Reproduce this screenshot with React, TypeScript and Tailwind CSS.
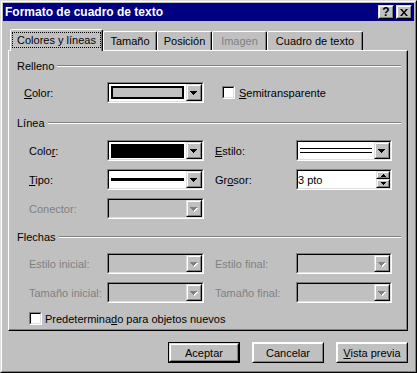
import React from "react";

const Raised = ({ className = "", children }: { className?: string; children?: React.ReactNode }) => (
  <div className={`flex border border-t-[#dfdfdf] border-l-[#dfdfdf] border-r-black border-b-black ${className}`}>
    <div className="flex flex-1 items-center justify-center border border-t-white border-l-white border-r-[#808080] border-b-[#808080] bg-[#c0c0c0]">
      {children}
    </div>
  </div>
);

const Sunken = ({ className = "", inner = "", children }: { className?: string; inner?: string; children?: React.ReactNode }) => (
  <div className={`flex border border-t-[#808080] border-l-[#808080] border-r-white border-b-white ${className}`}>
    <div className={`flex flex-1 border border-t-black border-l-black border-r-[#dfdfdf] border-b-[#dfdfdf] ${inner}`}>{children}</div>
  </div>
);

const Arrow = ({ disabled = false }: { disabled?: boolean }) => {
  const d = "M0 0h7v1H0zM1 1h5v1H1zM2 2h3v1H2zM3 3h1v1H3z";
  return (
    <svg width="8" height="5" viewBox="0 0 8 5" className="mt-px">
      {disabled && <path d={d} fill="#fff" transform="translate(1 1)" />}
      <path d={d} fill={disabled ? "#808080" : "#000"} />
    </svg>
  );
};

const Combo = ({ w = "w-[97px]", disabled = false, children }: { w?: string; disabled?: boolean; children?: React.ReactNode }) => (
  <Sunken className={`${w} h-[21px] shrink-0`} inner={disabled ? "bg-[#c0c0c0]" : "bg-white"}>
    <div className="flex min-w-0 flex-1 items-center px-[2px]">{children}</div>
    <Raised className="w-[16px]">
      <Arrow disabled={disabled} />
    </Raised>
  </Sunken>
);

const Checkbox = () => <Sunken className="h-[13px] w-[13px] shrink-0" inner="bg-white" />;

const Section = ({ title }: { title: string }) => (
  <div className="flex h-[14px] items-center">
    <span>{title}</span>
    <div className="ml-[3px] flex-1 border-t border-b border-t-[#808080] border-b-white" />
  </div>
);

const Tab = ({ label, w, disabled = false }: { label: string; w: string; disabled?: boolean }) => (
  <div
    className={`flex h-[19px] ${w} justify-center rounded-t-[2px] border-t border-l border-r border-t-white border-l-white border-r-black pt-[2px] shadow-[inset_-1px_0_0_#808080] ${
      disabled ? "text-[#808080]" : ""
    }`}
  >
    {label}
  </div>
);

const PushButton = ({ children, def = false }: { children: React.ReactNode; def?: boolean }) =>
  def ? (
    <div className="flex h-[21px] w-[72px] border border-black">
      <Raised className="flex-1">{children}</Raised>
    </div>
  ) : (
    <Raised className="h-[21px] w-[72px] border-t-white border-l-white">{children}</Raised>
  );

export default function App() {
  return (
    <div className="h-[373px] w-[417px] border border-t-[#dfdfdf] border-l-[#dfdfdf] border-r-black border-b-black bg-[#c0c0c0] font-['Liberation_Sans',Arial,sans-serif] text-[11px] leading-[14px] text-black">
      <div className="flex h-full flex-col border border-t-white border-l-white border-r-[#808080] border-b-[#808080] p-px">
        {/* title bar */}
        <div className="flex h-[18px] items-center bg-[#000080] pl-[2px] pr-[2px]">
          <span className="flex-1 text-[12px] font-bold text-white">Formato de cuadro de texto</span>
          <Raised className="h-[14px] w-[16px]">
            <span className="text-[12px] font-bold leading-[10px]">?</span>
          </Raised>
          <Raised className="ml-[2px] h-[14px] w-[16px]">
            <svg width="8" height="7" viewBox="0 0 8 7">
              <path d="M0 0h2l2 2.5L6 0h2L5 3.5 8 7H6L4 4.5 2 7H0l3-3.5z" fill="#000" />
            </svg>
          </Raised>
        </div>

        {/* tabs */}
        <div className="flex h-[29px] items-end pl-[7px]">
          <div className="relative z-10 -mb-px flex h-[22px] w-[93px] justify-center rounded-t-[2px] border-t border-l border-r border-t-white border-l-white border-r-black bg-[#c0c0c0] pt-[2px] shadow-[inset_-1px_0_0_#808080]">
            <span className="h-[16px] border border-dotted border-black px-[4px]">Colores y líneas</span>
          </div>
          <Tab label="Tamaño" w="w-[54px]" />
          <Tab label="Posición" w="w-[55px]" />
          <Tab label="Imagen" w="w-[55px]" disabled />
          <Tab label="Cuadro de texto" w="w-[96px]" />
        </div>

        {/* panel */}
        <div className="ml-[5px] mr-[6px] h-[281px] border border-t-white border-l-white border-r-black border-b-black shadow-[inset_-1px_-1px_0_#808080]">
          <div className="pl-[8px] pr-[6px] pt-[8px]">
            <Section title="Relleno" />
            <div className="mt-[9px] flex h-[21px] items-center">
              <span className="ml-[7px] w-[83px]">
                <u>C</u>olor:
              </span>
              <Combo>
                <div className="h-[13px] flex-1 border-2 border-black bg-[#c0c0c0]" />
              </Combo>
              <div className="ml-[18px] flex items-center">
                <Checkbox />
                <span className="ml-[4px]">
                  <u>S</u>emitransparente
                </span>
              </div>
            </div>

            <div className="mt-[13px]">
              <Section title="Línea" />
            </div>
            <div className="mt-[10px] flex h-[21px] items-center">
              <span className="ml-[12px] w-[78px]">
                Colo<u>r</u>:
              </span>
              <Combo>
                <div className="h-[14px] flex-1 bg-black" />
              </Combo>
              <span className="ml-[11px] w-[81px]">
                <u>E</u>stilo:
              </span>
              <Combo w="w-[96px]">
                <div className="flex flex-1 flex-col gap-[3px]">
                  <div className="h-px bg-black" />
                  <div className="h-px bg-black" />
                </div>
              </Combo>
            </div>
            <div className="mt-[8px] flex h-[21px] items-center">
              <span className="ml-[12px] w-[78px]">
                <u>T</u>ipo:
              </span>
              <Combo>
                <div className="h-[3px] flex-1 bg-black" />
              </Combo>
              <span className="ml-[11px] w-[81px]">
                Gr<u>o</u>sor:
              </span>
              <Sunken className="h-[21px] w-[96px] shrink-0" inner="bg-white">
                <div className="flex flex-1 items-center">3 pto</div>
                <div className="flex w-[14px] flex-col">
                  <Raised className="h-[8px]">
                    <svg width="5" height="3" viewBox="0 0 5 3">
                      <path d="M2 0h1v1H2zM1 1h3v1H1zM0 2h5v1H0z" fill="#000" />
                    </svg>
                  </Raised>
                  <Raised className="h-[9px]">
                    <svg width="5" height="3" viewBox="0 0 5 3">
                      <path d="M0 0h5v1H0zM1 1h3v1H1zM2 2h1v1H2z" fill="#000" />
                    </svg>
                  </Raised>
                </div>
              </Sunken>
            </div>
            <div className="mt-[8px] flex h-[21px] items-center">
              <span className="ml-[12px] w-[78px] text-[#808080]">Conector:</span>
              <Combo disabled />
            </div>

            <div className="mt-[11px]">
              <Section title="Flechas" />
            </div>
            <div className="mt-[9px] flex h-[21px] items-center text-[#808080]">
              <span className="ml-[12px] w-[78px]">Estilo inicial:</span>
              <Combo disabled />
              <span className="ml-[11px] w-[81px]">Estilo final:</span>
              <Combo w="w-[96px]" disabled />
            </div>
            <div className="mt-[8px] flex h-[21px] items-center text-[#808080]">
              <span className="ml-[12px] w-[78px]">Tamaño inicial:</span>
              <Combo disabled />
              <span className="ml-[11px] w-[81px]">Tamaño final:</span>
              <Combo w="w-[96px]" disabled />
            </div>
            <div className="mt-[9px] flex h-[13px] items-center">
              <div className="ml-[12px]">
                <Checkbox />
              </div>
              <span className="ml-[3px]">
                Predetermina<u>d</u>o para objetos nuevos
              </span>
            </div>
          </div>
        </div>

        {/* buttons */}
        <div className="mt-[11px] flex justify-end gap-[12px] pr-[6px]">
          <PushButton def>Aceptar</PushButton>
          <PushButton>Cancelar</PushButton>
          <PushButton>
            <span>
              <u>V</u>ista previa
            </span>
          </PushButton>
        </div>
      </div>
    </div>
  );
}
